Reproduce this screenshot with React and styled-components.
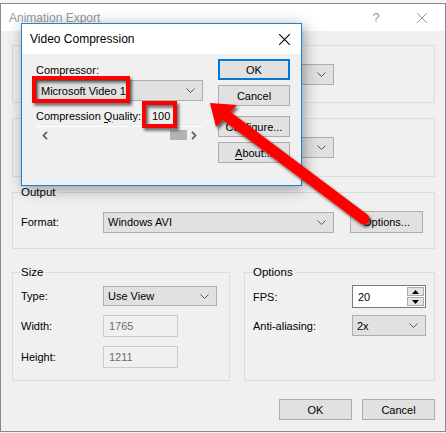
import React from "react";
import styled, { createGlobalStyle } from "styled-components";

const GlobalStyle = createGlobalStyle`
  html, body {
    margin: 0;
    padding: 0;
  }
  body {
    width: 446px;
    height: 433px;
    overflow: hidden;
    background: #f4f4f4;
    font-family: "Liberation Sans", Arial, sans-serif;
    font-size: 11px;
    color: #000;
  }
`;

const Desktop = styled.div`
  position: relative;
  width: 446px;
  height: 433px;
  padding-top: 3px;
  box-sizing: border-box;
`;

const Window = styled.div`
  width: 446px;
  height: 429px;
  box-sizing: border-box;
  border: 1px solid #8a8a8a;
  background: #f0f0f0;
  display: flex;
  flex-direction: column;
`;

const TitleBar = styled.div`
  height: ${(p) => p.$height}px;
  background: #fff;
  display: flex;
  align-items: center;
  padding-left: ${(p) => p.$pad}px;
  flex-shrink: 0;
`;

const TitleText = styled.div`
  flex: 1;
  font-size: ${(p) => p.$size}px;
  color: ${(p) => (p.$inactive ? "#9a9a9a" : "#000")};
`;

const TitleButton = styled.div`
  width: ${(p) => p.$w}px;
  height: 100%;
  display: flex;
  align-items: center;
  justify-content: center;
  color: #9a9a9a;
  font-size: 13px;
`;

const Body = styled.div`
  padding: 14px 10px 0 11px;
  display: flex;
  flex-direction: column;
`;

const Group = styled.fieldset`
  margin: ${(p) => p.$mt || 0}px 0 0 0;
  padding: ${(p) => p.$pt || 0}px 8px 0 8px;
  border: 1px solid #dcdcdc;
  height: ${(p) => p.$h}px;
  box-sizing: border-box;
  min-width: 0;
  width: ${(p) => (p.$w ? `${p.$w}px` : "auto")};
  display: flex;
  flex-direction: column;
  gap: ${(p) => p.$gap || 0}px;
`;

const Legend = styled.legend`
  padding: 0 2px 0 0;
  line-height: 14px;
  font-size: 11.5px;
`;

const Row = styled.div`
  display: flex;
  align-items: center;
`;

const SplitRow = styled.div`
  display: flex;
  gap: 14px;
  margin-top: 16px;
`;

const Label = styled.div`
  width: ${(p) => p.$w}px;
  flex-shrink: 0;
`;

const Combo = styled.div`
  width: ${(p) => p.$w}px;
  height: ${(p) => p.$h || 21}px;
  box-sizing: border-box;
  border: 1px solid #adadad;
  background: #e1e1e1;
  display: flex;
  align-items: center;
  padding: 0 7px 0 4px;
  flex-shrink: 0;
  margin-left: ${(p) => p.$ml || 0}px;
`;

const ComboText = styled.div`
  flex: 1;
`;

const TextBox = styled.div`
  width: ${(p) => p.$w}px;
  height: 22px;
  box-sizing: border-box;
  border: 1px solid ${(p) => (p.$disabled ? "#cccccc" : "#7a7a7a")};
  background: ${(p) => (p.$disabled ? "#f0f0f0" : "#fff")};
  color: ${(p) => (p.$disabled ? "#6d6d6d" : "#000")};
  display: flex;
  align-items: center;
  padding-left: 5px;
`;

const SpinBox = styled(TextBox)`
  height: 23px;
  padding-right: 1px;
  justify-content: space-between;
`;

const SpinButtons = styled.div`
  width: 17px;
  height: 19px;
  display: flex;
  flex-direction: column;
  gap: 1px;
`;

const SpinButton = styled.div`
  flex: 1;
  border: 1px solid #adadad;
  background: #e5e5e5;
  display: flex;
  align-items: center;
  justify-content: center;
`;

const Button = styled.div`
  width: ${(p) => p.$w || 73}px;
  height: ${(p) => p.$h || 21}px;
  box-sizing: border-box;
  border: ${(p) => (p.$default ? "2px solid #0078d7" : "1px solid #adadad")};
  background: #e1e1e1;
  display: flex;
  align-items: center;
  justify-content: center;
  flex-shrink: 0;
  margin-top: ${(p) => p.$mt || 0}px;
  margin-left: ${(p) => p.$ml || 0}px;
`;

const ButtonBar = styled.div`
  display: flex;
  justify-content: flex-end;
  gap: 10px;
  margin-top: 18px;
`;

/* ---- Video Compression dialog ---- */

const Dialog = styled.div`
  position: absolute;
  left: 21px;
  top: 23px;
  width: 281px;
  height: 163px;
  box-sizing: border-box;
  border: 1px solid #1883d7;
  background: #f0f0f0;
  box-shadow: 2px 3px 14px rgba(0, 0, 0, 0.38);
  display: flex;
  flex-direction: column;
`;

const DialogBody = styled.div`
  display: flex;
  gap: 15px;
  padding: 5px 0 0 14px;
`;

const LeftCol = styled.div`
  width: 167px;
  display: flex;
  flex-direction: column;
`;

const RightCol = styled.div`
  display: flex;
  flex-direction: column;
  gap: 5px;
`;

const FieldCaption = styled.div`
  line-height: 14px;
  margin-top: 4px;
  margin-bottom: 3px;
`;

const QualityRow = styled.div`
  display: flex;
  align-items: center;
  height: 21px;
  margin-top: 4px;
`;

const QualityValue = styled.div`
  margin-left: auto;
  width: 51px;
`;

const Underline = styled.span`
  text-decoration: underline;
  text-underline-offset: 2px;
`;

const ScrollBar = styled.div`
  border-top: 1px solid #fff;
  height: 13px;
  display: flex;
  align-items: flex-end;
  padding: 0 5px 0 5px;
`;

const ScrollArrow = styled.div`
  width: 8px;
  height: 10px;
  display: flex;
  align-items: center;
  justify-content: center;
`;

const ScrollTrack = styled.div`
  flex: 1;
  height: 10px;
  display: flex;
  justify-content: flex-end;
  padding-right: 3px;
`;

const Thumb = styled.div`
  width: 17px;
  height: 10px;
  background: #b3b3b3;
`;

const Overlay = styled.svg`
  position: absolute;
  left: 0;
  top: 0;
  pointer-events: none;
`;

const Chevron = () => (
  <svg width="9" height="5" viewBox="0 0 9 5">
    <polyline points="0.5,0.5 4.5,4.5 8.5,0.5" fill="none" stroke="#555" strokeWidth="1" />
  </svg>
);

const Cross = ({ size, color }) => (
  <svg width={size} height={size} viewBox="0 0 10 10">
    <path d="M0 0 L10 10 M10 0 L0 10" stroke={color} strokeWidth="1" />
  </svg>
);

const Arrow = ({ dir }) => (
  <svg width="6" height="9" viewBox="0 0 6 9">
    <polyline
      points={dir === "left" ? "5,0.8 1.5,4.5 5,8.2" : "1,0.8 4.5,4.5 1,8.2"}
      fill="none"
      stroke="#606060"
      strokeWidth="1.8"
    />
  </svg>
);

const Tri = ({ up }) => (
  <svg width="7" height="4" viewBox="0 0 7 4">
    <polygon points={up ? "0,4 7,4 3.5,0" : "0,0 7,0 3.5,4"} fill="#000" />
  </svg>
);

export default function App() {
  return (
    <Desktop>
      <GlobalStyle />
      <Window>
        <TitleBar $height={27} $pad={8}>
          <TitleText $inactive $size={12}>
            Animation Export
          </TitleText>
          <TitleButton $w={46}>?</TitleButton>
          <TitleButton $w={46}>
            <Cross size={10} color="#9a9a9a" />
          </TitleButton>
        </TitleBar>
        <Body>
          <Group $h={58} $pt={18}>
            <Combo $w={231} $ml={82}>
              <ComboText />
              <Chevron />
            </Combo>
          </Group>
          <Group $h={59} $mt={15} $pt={18}>
            <Combo $w={231} $ml={82}>
              <ComboText />
              <Chevron />
            </Combo>
          </Group>
          <Group $h={64} $mt={8} $pt={12}>
            <Legend>Output</Legend>
            <Row>
              <Label $w={82}>Format:</Label>
              <Combo $w={231}>
                <ComboText>Windows AVI</ComboText>
                <Chevron />
              </Combo>
              <Button $w={73} $h={22} $ml={16}>
                Options...
              </Button>
            </Row>
          </Group>
          <SplitRow>
            <Group $w={218} $h={116} $pt={7} $gap={9}>
              <Legend>Size</Legend>
              <Row>
                <Label $w={82}>Type:</Label>
                <Combo $w={114} $h={20}>
                  <ComboText>Use View</ComboText>
                  <Chevron />
                </Combo>
              </Row>
              <Row>
                <Label $w={82}>Width:</Label>
                <TextBox $w={75} $disabled>1765</TextBox>
              </Row>
              <Row>
                <Label $w={82}>Height:</Label>
                <TextBox $w={75} $disabled>1211</TextBox>
              </Row>
            </Group>
            <Group $w={191} $h={116} $pt={6} $gap={7}>
              <Legend>Options</Legend>
              <Row>
                <Label $w={99}>FPS:</Label>
                <SpinBox $w={74}>
                  20
                  <SpinButtons>
                    <SpinButton>
                      <Tri up />
                    </SpinButton>
                    <SpinButton>
                      <Tri />
                    </SpinButton>
                  </SpinButtons>
                </SpinBox>
              </Row>
              <Row>
                <Label $w={99}>Anti-aliasing:</Label>
                <Combo $w={74}>
                  <ComboText>2x</ComboText>
                  <Chevron />
                </Combo>
              </Row>
            </Group>
          </SplitRow>
          <ButtonBar>
            <Button>OK</Button>
            <Button>Cancel</Button>
          </ButtonBar>
        </Body>
      </Window>

      <Dialog>
        <TitleBar $height={30} $pad={8}>
          <TitleText $size={12}>Video Compression</TitleText>
          <TitleButton $w={34}>
            <Cross size={11} color="#000" />
          </TitleButton>
        </TitleBar>
        <DialogBody>
          <LeftCol>
            <FieldCaption>Compressor:</FieldCaption>
            <Combo $w={167}>
              <ComboText>Microsoft Video 1</ComboText>
              <Chevron />
            </Combo>
            <QualityRow>
              <span>
                Compression <Underline>Q</Underline>uality:
              </span>
              <QualityValue>100</QualityValue>
            </QualityRow>
            <ScrollBar>
              <ScrollArrow>
                <Arrow dir="left" />
              </ScrollArrow>
              <ScrollTrack>
                <Thumb />
              </ScrollTrack>
              <ScrollArrow>
                <Arrow dir="right" />
              </ScrollArrow>
            </ScrollBar>
          </LeftCol>
          <RightCol>
            <Button $w={72} $default>
              OK
            </Button>
            <Button $w={72}>Cancel</Button>
            <Button $w={72} $mt={5}>
              Configure...
            </Button>
            <Button $w={72}>
              <span>
                <Underline>A</Underline>bout...
              </span>
            </Button>
          </RightCol>
        </DialogBody>
      </Dialog>

      <Overlay width="446" height="433" viewBox="0 0 446 433">
        <defs>
          <filter id="shade" x="-20%" y="-20%" width="140%" height="140%">
            <feDropShadow dx="2" dy="2.5" stdDeviation="1.6" floodColor="#000" floodOpacity="0.6" />
          </filter>
        </defs>
        <g filter="url(#shade)">
          <rect x="34" y="78" width="94" height="23" fill="none" stroke="#ff0000" strokeWidth="4" />
          <rect x="144" y="103" width="31" height="23" fill="none" stroke="#ff0000" strokeWidth="4" />
          <line x1="224" y1="114" x2="364" y2="219" stroke="#ff0000" strokeWidth="11" strokeLinecap="round" />
          <polygon points="210,103 237,105 216,127" fill="#ff0000" />
        </g>
      </Overlay>
    </Desktop>
  );
}
